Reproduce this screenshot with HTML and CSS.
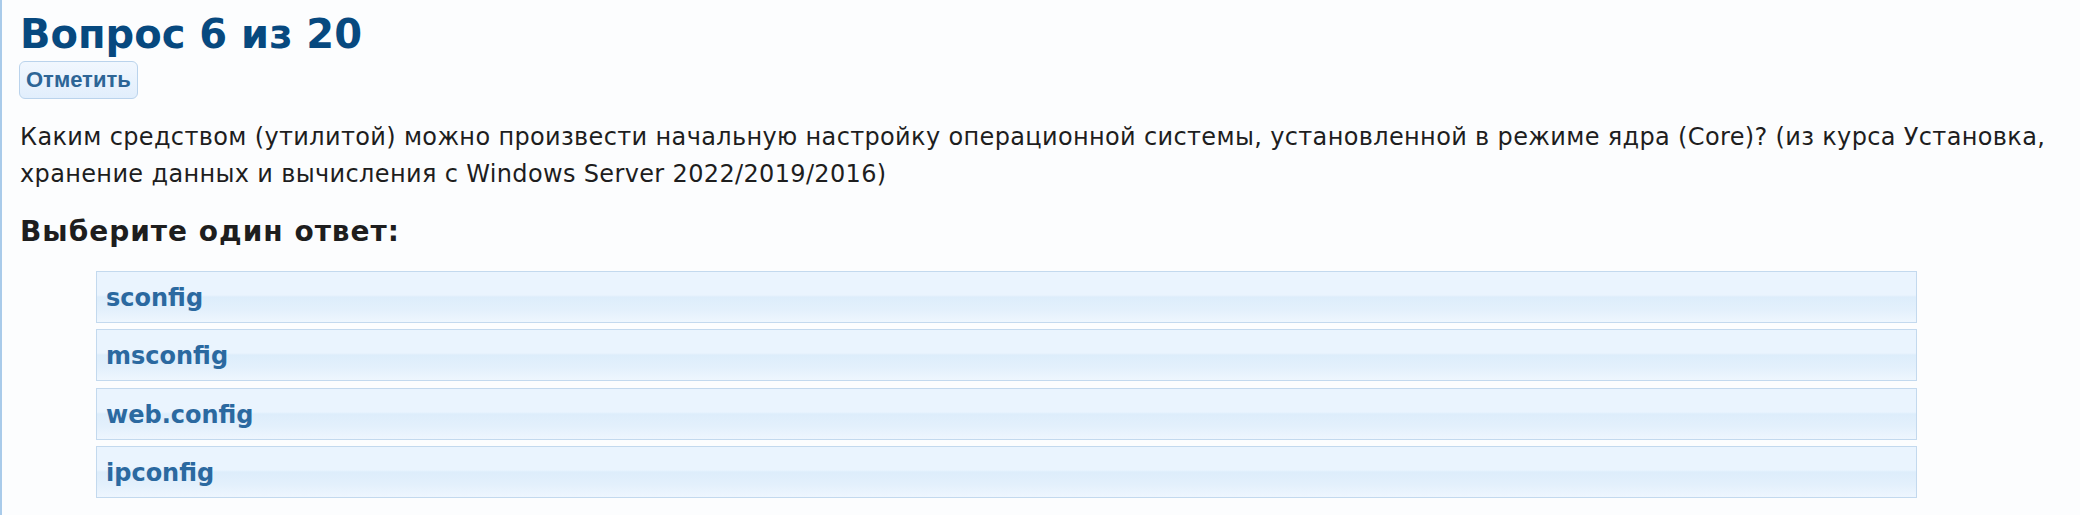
FILE: index.html
```html
<!DOCTYPE html>
<html lang="ru">
<head>
    <meta charset="UTF-8">
    <meta name="viewport" content="width=device-width, initial-scale=1.0">
    <title>Вопрос 6 из 20</title>
    <link rel="stylesheet" href="styles.css">
</head>
<body>
    <div class="quiz">
        <h1 class="quiz-title">Вопрос 6 из 20</h1>
        <button class="mark-button" type="button">Отметить</button>

        <!-- текст вопроса -->
        <p class="question-text">Каким средством (утилитой) можно произвести начальную настройку операционной системы, установленной в режиме ядра (Core)? (из курса Установка, хранение данных и вычисления с Windows Server 2022/2019/2016)</p>

        <h2 class="answer-title">Выберите один ответ:</h2>

        <!-- варианты ответа -->
        <div class="answers">
            <div class="answer">sconfig</div>
            <div class="answer">msconfig</div>
            <div class="answer">web.config</div>
            <div class="answer">ipconfig</div>
        </div>
    </div>
</body>
</html>
```
FILE: styles.css
```css
html, body {
    margin: 0;
    padding: 0;
    background: #fcfdfe;
}
body {
    font-family: "DejaVu Sans", "Inter", sans-serif;
    color: #1e1e1e;
}
.quiz {
    min-height: 515px;
    box-sizing: border-box;
    border-left: 2px solid #a9cbea;
    padding: 10px 20px 0 18px;
}
.quiz-title {
    margin: 0;
    font-size: 40px;
    line-height: 48px;
    font-weight: bold;
    color: #07497f;
}
.mark-button {
    display: block;
    margin: 3px 0 0 -1px;
    height: 38px;
    padding: 0 6px;
    font-family: "Liberation Sans", Arial, sans-serif;
    font-size: 22px;
    font-weight: bold;
    color: #2d6596;
    background: linear-gradient(#f1f7fe, #e1eefc);
    border: 1px solid #bad3ec;
    border-radius: 6px;
    cursor: pointer;
}
.question-text {
    margin: 20px 0 0 0;
    font-size: 24px;
    line-height: 37px;
    letter-spacing: 0.35px;
}
.answer-title {
    margin: 22px 0 0 0;
    font-size: 28px;
    line-height: 34px;
    letter-spacing: 1px;
    font-weight: bold;
}
.answers {
    display: flex;
    flex-direction: column;
    gap: 6.3px;
    width: 1821px;
    margin: 22px 0 0 76px;
}
.answer {
    box-sizing: border-box;
    height: 52px;
    padding: 2px 0 0 9px;
    line-height: 48px;
    font-size: 24px;
    font-weight: bold;
    color: #2b69a0;
    border: 1px solid #c3d9ee;
    background: linear-gradient(#eaf4fe 0%, #eaf4fe 46%, #ddedfb 50%, #e3f0fc 75%, #eef6fe 100%);
    cursor: pointer;
}
```
